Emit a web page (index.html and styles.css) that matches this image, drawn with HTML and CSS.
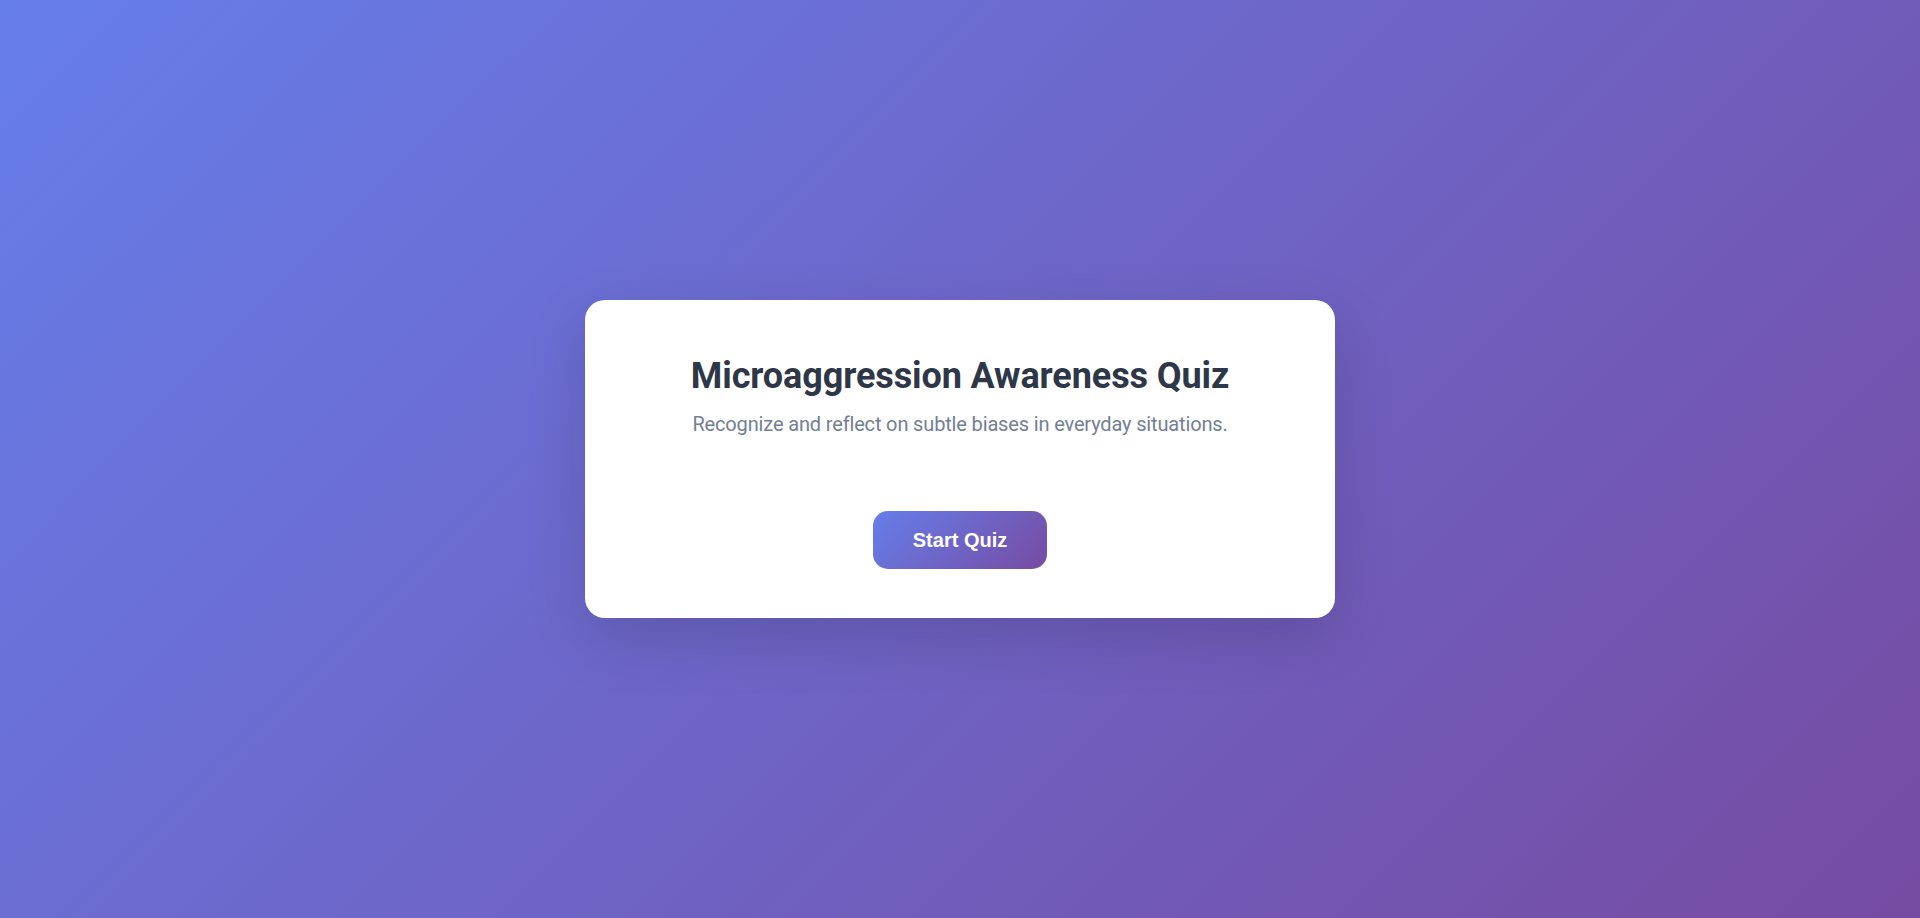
FILE: index.html
```html
<!DOCTYPE html>
<html lang="en">
<head>
<meta charset="utf-8">
<title>Microaggression Awareness Quiz</title>
<link rel="stylesheet" href="styles.css">
</head>
<body>
<main class="page">
  <section class="card">
    <h1 class="title">Microaggression Awareness Quiz</h1>
    <p class="subtitle">Recognize and reflect on subtle biases in everyday situations.</p>
    <button class="start-btn" type="button">Start Quiz</button>
  </section>
</main>
</body>
</html>
```

FILE: styles.css
```css
html, body {
  margin: 0;
  padding: 0;
  height: 100%;
}

body {
  font-family: Roboto, "Noto Sans", "Liberation Sans", sans-serif;
  background: linear-gradient(135deg, #667eea 0%, #764ba2 100%);
}

.page {
  min-height: 100vh;
  display: flex;
  align-items: center;
  justify-content: center;
}

.card {
  box-sizing: border-box;
  width: 750px;
  height: 318px;
  background: #ffffff;
  border-radius: 20px;
  box-shadow: 0 20px 60px rgba(0, 0, 0, 0.15);
  padding: 55px 40px 0;
  display: flex;
  flex-direction: column;
  align-items: center;
  text-align: center;
}

.title {
  margin: 0 0 11px;
  font-size: 36px;
  line-height: 43px;
  font-weight: 700;
  letter-spacing: -0.1px;
  color: #2d3748;
}

.subtitle {
  margin: 0 0 72px;
  font-size: 20px;
  line-height: 30px;
  letter-spacing: -0.15px;
  color: #718096;
}

.start-btn {
  height: 58px;
  padding: 0 40px;
  border: none;
  border-radius: 15px;
  background: linear-gradient(135deg, #667eea 0%, #764ba2 100%);
  color: #ffffff;
  font-family: "Liberation Sans", Arial, sans-serif;
  font-size: 20px;
  font-weight: 700;
  cursor: pointer;
}
```
